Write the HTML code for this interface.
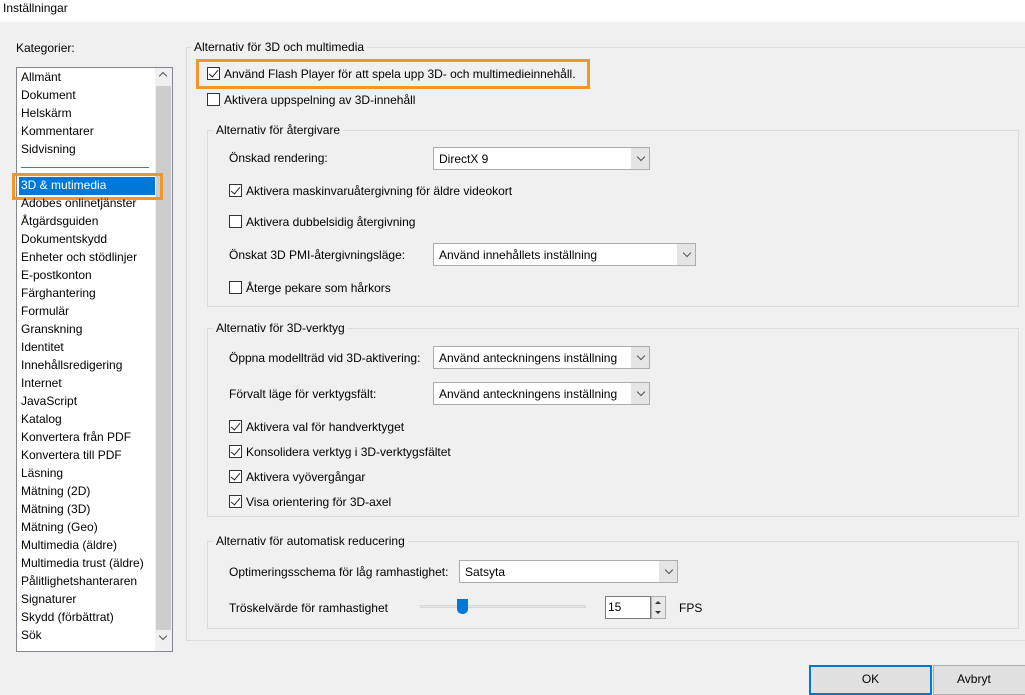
<!DOCTYPE html>
<html><head><meta charset="utf-8"><style>
*{box-sizing:border-box;margin:0;padding:0}
body{width:1025px;height:687px;background:#f0f0f0;font-family:"Liberation Sans",sans-serif;font-size:12px;color:#000;position:relative;overflow:hidden}
.a{position:absolute;white-space:nowrap}
.t{line-height:14px}
.grp{position:absolute;border:1px solid #dcdcdc}
.gt{position:absolute;background:#f0f0f0;padding:0 3px;line-height:14px}
.cb{position:absolute;width:13px;height:13px;border:1px solid #333;background:#fff}
.cb.c::after{content:"";position:absolute;left:3px;top:0px;width:4px;height:8px;border:solid #222;border-width:0 1.3px 1.3px 0;transform:rotate(40deg)}
.sel{position:absolute;height:23px;border:1px solid #adadad;background:#e5e5e5}
.sel .v{position:absolute;left:0;top:0;bottom:0;right:18px;background:#fff;padding:4px 0 0 5px;line-height:14px}
.sel .ar{position:absolute;right:5px;top:6px;width:6px;height:6px;border:solid #555;border-width:0 1px 1px 0;transform:rotate(45deg)}
.li{position:absolute;left:21px;line-height:14px}
</style></head><body>
<div class="a" style="left:0;top:0;width:1025px;height:22px;background:#fff"></div>
<div class="a t" style="left:3px;top:1px">Inställningar</div>
<div class="a t" style="left:16px;top:41px">Kategorier:</div>
<div class="a" style="left:16px;top:67px;width:157px;height:585px;border:1px solid #828790;background:#fff"></div>
<div class="a" style="left:155px;top:68px;width:17px;height:583px;background:#f0f0f0"></div>
<div class="a" style="left:156px;top:86px;width:15px;height:544px;background:#cdcdcd"></div>
<div class="a" style="left:160px;top:73px;width:6px;height:6px;border:solid #555;border-width:1.5px 0 0 1.5px;transform:rotate(45deg)"></div>
<div class="a" style="left:160px;top:633px;width:6px;height:6px;border:solid #555;border-width:0 1.5px 1.5px 0;transform:rotate(45deg)"></div>
<div class="a" style="left:21px;top:167px;width:128px;height:1px;background:#3c7fb1"></div>
<div class="a" style="left:19px;top:177px;width:136px;height:18px;background:#0078d7"></div>
<div class="a" style="left:12px;top:173px;width:151px;height:27px;border:3px solid #f0962a"></div>
<div class="li" style="top:70px">Allmänt</div>
<div class="li" style="top:88px">Dokument</div>
<div class="li" style="top:106px">Helskärm</div>
<div class="li" style="top:124px">Kommentarer</div>
<div class="li" style="top:142px">Sidvisning</div>
<div class="li" style="top:178px;color:#fff">3D &amp; mutimedia</div>
<div class="li" style="top:196px">Adobes onlinetjänster</div>
<div class="li" style="top:214px">Åtgärdsguiden</div>
<div class="li" style="top:232px">Dokumentskydd</div>
<div class="li" style="top:250px">Enheter och stödlinjer</div>
<div class="li" style="top:268px">E-postkonton</div>
<div class="li" style="top:286px">Färghantering</div>
<div class="li" style="top:304px">Formulär</div>
<div class="li" style="top:322px">Granskning</div>
<div class="li" style="top:340px">Identitet</div>
<div class="li" style="top:358px">Innehållsredigering</div>
<div class="li" style="top:376px">Internet</div>
<div class="li" style="top:394px">JavaScript</div>
<div class="li" style="top:412px">Katalog</div>
<div class="li" style="top:430px">Konvertera från PDF</div>
<div class="li" style="top:448px">Konvertera till PDF</div>
<div class="li" style="top:466px">Läsning</div>
<div class="li" style="top:484px">Mätning (2D)</div>
<div class="li" style="top:502px">Mätning (3D)</div>
<div class="li" style="top:520px">Mätning (Geo)</div>
<div class="li" style="top:538px">Multimedia (äldre)</div>
<div class="li" style="top:556px">Multimedia trust (äldre)</div>
<div class="li" style="top:574px">Pålitlighetshanteraren</div>
<div class="li" style="top:592px">Signaturer</div>
<div class="li" style="top:610px">Skydd (förbättrat)</div>
<div class="li" style="top:628px">Sök</div>

<div class="grp" style="left:186px;top:47px;width:850px;height:594px"></div>
<div class="gt" style="left:191px;top:40px">Alternativ för 3D och multimedia</div>
<div class="a" style="left:196px;top:59px;width:394px;height:30px;border:3px solid #f0962a"></div>
<div class="cb c" style="left:207px;top:67px"></div>
<div class="a t" style="left:224px;top:67px">Använd Flash Player för att spela upp 3D- och multimedieinnehåll.</div>
<div class="cb" style="left:207px;top:93px"></div>
<div class="a t" style="left:224px;top:93px">Aktivera uppspelning av 3D-innehåll</div>

<div class="grp" style="left:207px;top:130px;width:812px;height:177px"></div>
<div class="gt" style="left:213px;top:123px">Alternativ för återgivare</div>
<div class="a t" style="left:229px;top:151px">Önskad rendering:</div>
<div class="sel" style="left:433px;top:147px;width:217px"><div class="v">DirectX 9</div><div class="ar"></div></div>
<div class="cb c" style="left:229px;top:184px"></div><div class="a t" style="left:246px;top:184px">Aktivera maskinvaruåtergivning för äldre videokort</div>
<div class="cb" style="left:229px;top:215px"></div><div class="a t" style="left:246px;top:215px">Aktivera dubbelsidig återgivning</div>
<div class="a t" style="left:229px;top:248px">Önskat 3D PMI-återgivningsläge:</div>
<div class="sel" style="left:433px;top:243px;width:263px"><div class="v">Använd innehållets inställning</div><div class="ar"></div></div>
<div class="cb" style="left:229px;top:281px"></div><div class="a t" style="left:246px;top:281px">Återge pekare som hårkors</div>

<div class="grp" style="left:207px;top:328px;width:812px;height:189px"></div>
<div class="gt" style="left:213px;top:321px">Alternativ för 3D-verktyg</div>
<div class="a t" style="left:229px;top:351px">Öppna modellträd vid 3D-aktivering:</div>
<div class="sel" style="left:433px;top:346px;width:217px"><div class="v">Använd anteckningens inställning</div><div class="ar"></div></div>
<div class="a t" style="left:229px;top:387px">Förvalt läge för verktygsfält:</div>
<div class="sel" style="left:433px;top:382px;width:217px"><div class="v">Använd anteckningens inställning</div><div class="ar"></div></div>
<div class="cb c" style="left:229px;top:420px"></div><div class="a t" style="left:246px;top:420px">Aktivera val för handverktyget</div>
<div class="cb c" style="left:229px;top:445px"></div><div class="a t" style="left:246px;top:445px">Konsolidera verktyg i 3D-verktygsfältet</div>
<div class="cb c" style="left:229px;top:470px"></div><div class="a t" style="left:246px;top:470px">Aktivera vyövergångar</div>
<div class="cb c" style="left:229px;top:495px"></div><div class="a t" style="left:246px;top:495px">Visa orientering för 3D-axel</div>

<div class="grp" style="left:207px;top:541px;width:812px;height:88px"></div>
<div class="gt" style="left:213px;top:534px">Alternativ för automatisk reducering</div>
<div class="a t" style="left:229px;top:565px">Optimeringsschema för låg ramhastighet:</div>
<div class="sel" style="left:459px;top:560px;width:219px"><div class="v">Satsyta</div><div class="ar"></div></div>
<div class="a t" style="left:229px;top:601px">Tröskelvärde för ramhastighet</div>
<div class="a" style="left:420px;top:605px;width:166px;height:3px;background:#e7eaea;border:1px solid #d6d6d6"></div>
<div class="a" style="left:457px;top:599px;width:11px;height:15px;background:#0078d7;border-radius:0 0 5px 5px"></div>
<div class="a" style="left:605px;top:596px;width:46px;height:23px;border:1px solid #7a7a7a;background:#fff;padding:3px 0 0 2px;line-height:14px">15</div>
<div class="a" style="left:651px;top:596px;width:15px;height:23px;border:1px solid #adadad;background:#e8e8e8"></div>
<div class="a" style="left:655px;top:601px;width:0;height:0;border:3px solid transparent;border-bottom:3px solid #333;border-top:0"></div>
<div class="a" style="left:655px;top:611px;width:0;height:0;border:3px solid transparent;border-top:3px solid #333;border-bottom:0"></div>
<div class="a t" style="left:679px;top:601px">FPS</div>

<div class="a" style="left:809px;top:665px;width:123px;height:30px;border:2px solid #0078d7;background:#e1e1e1;text-align:center;padding-top:5px">OK</div>
<div class="a" style="left:933px;top:665px;width:100px;height:30px;border:1px solid #adadad;background:#e1e1e1;padding:6px 0 0 23px">Avbryt</div>
</body></html>
